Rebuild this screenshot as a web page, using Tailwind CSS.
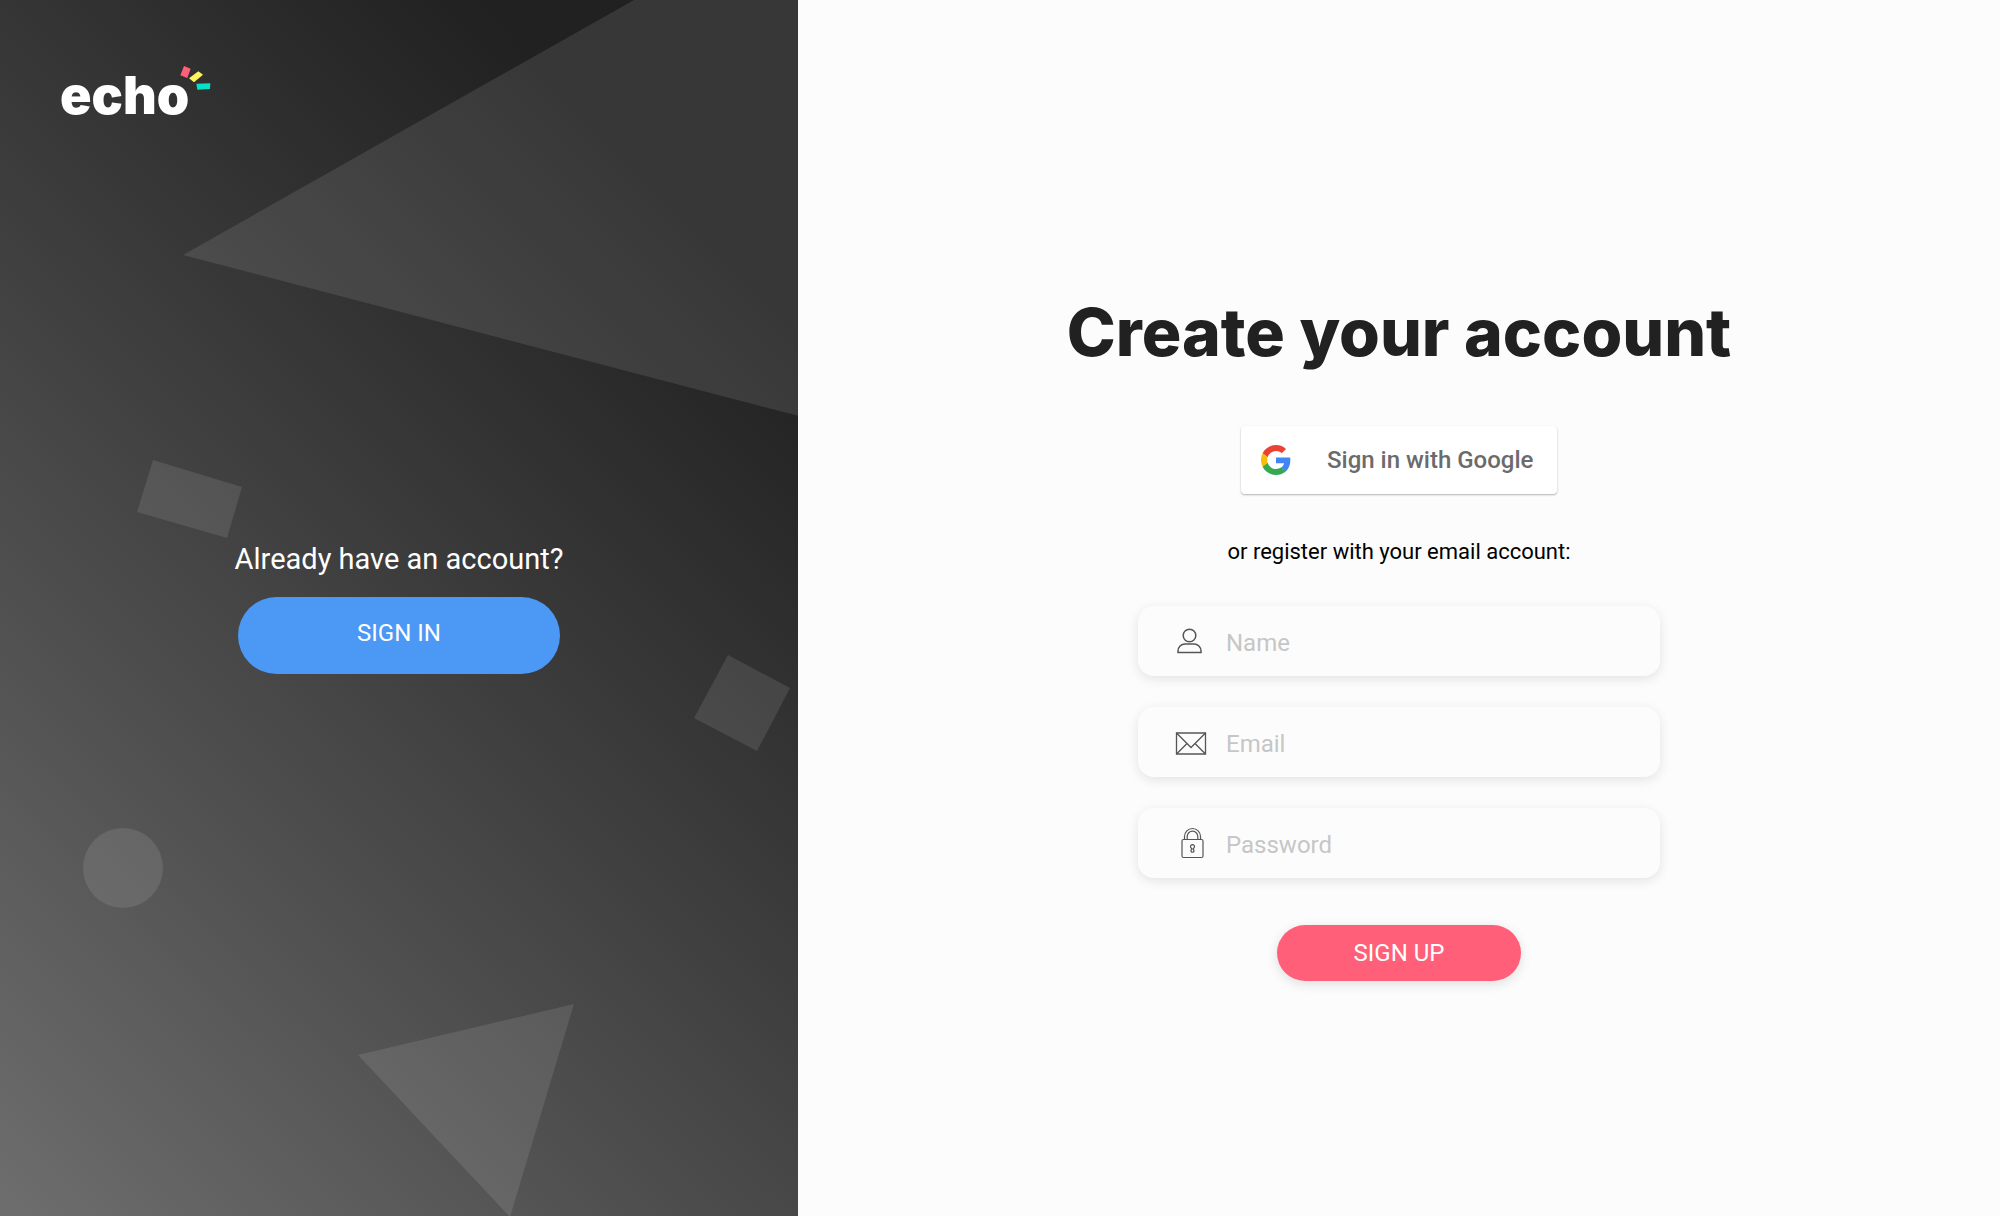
<!DOCTYPE html>
<html lang="en">

<head>
    <meta charset="UTF-8">
    <meta name="viewport" content="width=device-width, initial-scale=1.0">
    <title>echo - Create your account</title>
    <script src="https://cdn.jsdelivr.net/npm/@tailwindcss/browser@4"></script>
</head>

<body class="font-['Roboto',sans-serif] bg-[#fcfcfc]">
    <div class="flex min-h-screen">
        <!-- left side -->
        <aside class="relative w-[39.9%] overflow-hidden flex flex-col items-center justify-center pb-0.5 bg-linear-45 from-[#6e6e6e] to-[#212121] to-84% text-white">
            <svg class="absolute inset-0 w-full h-full" viewBox="0 0 798 1216" preserveAspectRatio="xMinYMin slice" fill="#fff" fill-opacity="0.1" aria-hidden="true">
                <path d="M183 255 L634 0 H810 V419 Z" />
                <path d="M153 460 L242 487 L227 538 L137 512 Z" />
                <path d="M728 655 L790 688 L757 751 L694 718 Z" />
                <circle cx="123" cy="868" r="40" />
                <path d="M358 1055 L574 1004 L510 1217 Z" />
            </svg>
            <a href="#" class="absolute left-15 top-16 flex items-start">
                <span class="font-['Inter',sans-serif] font-black text-[52px] leading-16">echo</span>
                <svg class="absolute left-30 top-0.5" width="31" height="24" viewBox="420 50 93 72" aria-hidden="true">
                    <path fill="#ff5f78" d="M432 50 L452 58 L442 86 L421 78 Z" />
                    <path fill="#fff35c" d="M475 66 L489 76 L462 99 L447 87 Z" />
                    <path fill="#06e0c5" d="M469 103 L511 102 L510 119 L472 121 Z" />
                </svg>
            </a>
            <p class="relative text-[29px] leading-9">Already have an account?</p>
            <button class="relative mt-5 w-[322px] h-[77px] pb-1 rounded-full bg-[#4c98f5] text-2xl cursor-pointer">SIGN IN</button>
        </aside>

        <!-- sign up form -->
        <main class="flex-1 flex flex-col items-center justify-center pt-14">
            <h1 class="font-['Inter',sans-serif] font-extrabold text-[66px] leading-20 text-[#212121]">Create your account</h1>
            <button class="mt-[54px] w-79 h-17 pl-5 flex items-center gap-9 rounded-sm bg-white shadow-[0_1px_2px_rgba(0,0,0,0.3)] cursor-pointer">
                <svg width="30" height="30" viewBox="0 0 48 48" aria-hidden="true">
                    <path fill="#EA4335" d="M24 9.500c3.540 0 6.710 1.220 9.210 3.600l6.850-6.850C35.900 2.380 30.470 0 24 0 14.620 0 6.510 5.380 2.560 13.220l7.980 6.190C12.430 13.720 17.740 9.500 24 9.500z" />
                    <path fill="#4285F4" d="M46.980 24.550c0-1.570-.15-3.090-.38-4.550H24v9.020h12.940c-.58 2.960-2.260 5.480-4.780 7.180l7.730 6c4.510-4.180 7.090-10.360 7.090-17.650z" />
                    <path fill="#FBBC05" d="M10.530 28.590c-.48-1.450-.76-2.990-.76-4.590s.27-3.140.76-4.590l-7.980-6.190C.92 16.460 0 20.120 0 24c0 3.880.92 7.540 2.560 10.780l7.970-6.190z" />
                    <path fill="#34A853" d="M24 48c6.480 0 11.930-2.130 15.890-5.810l-7.730-6c-2.150 1.450-4.920 2.300-8.160 2.300-6.260 0-11.570-4.220-13.470-9.910l-7.980 6.190C6.510 42.620 14.620 48 24 48z" />
                </svg>
                <span class="font-medium text-2xl text-[#6b6b6b]">Sign in with Google</span>
            </button>
            <p class="mt-10 text-[22px] leading-9 text-black">or register with your email account:</p>

            <form class="mt-9 flex flex-col items-center gap-[31px]">
                <label class="w-[522px] h-[70px] px-9 flex items-center gap-4 rounded-2xl shadow-[0_3px_12px_rgba(0,0,0,0.1)]">
                    <svg width="36" height="36" viewBox="0 0 36 36" fill="none" stroke="#555" stroke-width="1.500" aria-hidden="true">
                        <circle cx="15.500" cy="12.500" r="6.300" />
                        <path d="M4 29.500V28a7 7 0 0 1 7-7h9a7 7 0 0 1 7 7v1.500z" />
                    </svg>
                    <input type="text" placeholder="Name" aria-label="Name" class="flex-1 min-w-0 pt-1 text-2xl outline-none placeholder:text-[#c6c6c6]">
                </label>
                <label class="w-[522px] h-[70px] px-9 flex items-center gap-4 rounded-2xl shadow-[0_3px_12px_rgba(0,0,0,0.1)]">
                    <svg width="36" height="36" viewBox="0 0 36 36" fill="none" stroke="#555" stroke-width="1.300" aria-hidden="true">
                        <path d="M2.500 9h29v21h-29z" />
                        <path d="M2.500 9l10.500 10.500l4 4l4-4L31.500 9M2.500 30l10.500-10.500M31.500 30L21 19.500" />
                    </svg>
                    <input type="email" placeholder="Email" aria-label="Email" class="flex-1 min-w-0 pt-1 text-2xl outline-none placeholder:text-[#c6c6c6]">
                </label>
                <label class="w-[522px] h-[70px] px-9 flex items-center gap-4 rounded-2xl shadow-[0_3px_12px_rgba(0,0,0,0.1)]">
                    <svg width="36" height="36" viewBox="0 0 36 36" fill="none" stroke="#555" stroke-width="1.200" aria-hidden="true">
                        <rect x="8" y="14.500" width="21" height="18" rx="1.500" />
                        <path d="M10.500 14.500v-3a8 8 0 0 1 16 0v3M13.200 14.500v-3a5.300 5.300 0 0 1 10.600 0v3" />
                        <path d="M17.700 23.500a2 2 0 1 1 1.600 0v1a1.500 1.500 0 1 1-1.600 0z" />
                    </svg>
                    <input type="password" placeholder="Password" aria-label="Password" class="flex-1 min-w-0 pt-1 text-2xl outline-none placeholder:text-[#c6c6c6]">
                </label>
                <button type="submit" class="mt-4 w-61 h-14 rounded-full bg-[#ff5f78] text-2xl text-white shadow-[0_3px_12px_rgba(0,0,0,0.12)] cursor-pointer">SIGN UP</button>
            </form>
        </main>
    </div>
</body>

</html>
